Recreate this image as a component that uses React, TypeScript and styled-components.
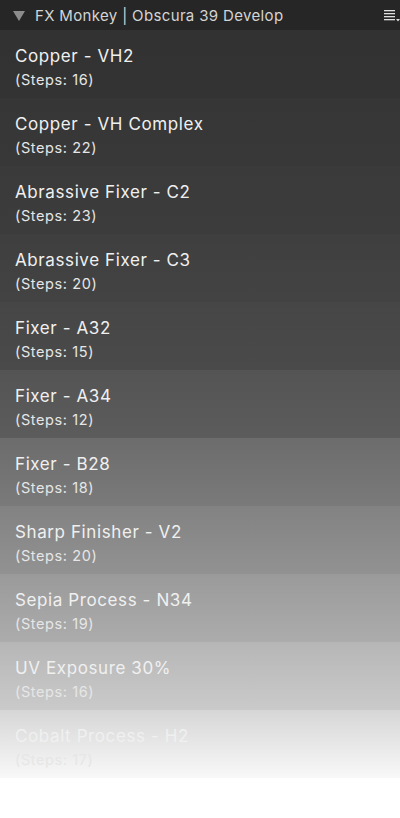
import styled, { createGlobalStyle } from 'styled-components'

const GlobalStyle = createGlobalStyle`
  html, body {
    margin: 0;
    padding: 0;
    background: #ffffff;
  }
  body {
    font-family: Inter, 'Liberation Sans', Arial, sans-serif;
    -webkit-font-smoothing: antialiased;
  }
`

interface Recipe {
  name: string
  steps: number
}

const RECIPES: Recipe[] = [
  { name: 'Copper - VH2', steps: 16 },
  { name: 'Copper - VH Complex', steps: 22 },
  { name: 'Abrassive Fixer - C2', steps: 23 },
  { name: 'Abrassive Fixer - C3', steps: 20 },
  { name: 'Fixer - A32', steps: 15 },
  { name: 'Fixer - A34', steps: 12 },
  { name: 'Fixer - B28', steps: 18 },
  { name: 'Sharp Finisher - V2', steps: 20 },
  { name: 'Sepia Process - N34', steps: 19 },
  { name: 'UV Exposure 30%', steps: 16 },
  { name: 'Cobalt Process - H2', steps: 17 },
]

//  row shades fade from dark to white towards the bottom
const SHADES: Array<[string, string]> = [
  ['#323232', '#333333'],
  ['#363636', '#383838'],
  ['#3a3a3a', '#3c3c3c'],
  ['#3f3f3f', '#434343'],
  ['#464646', '#4a4a4a'],
  ['#545454', '#5c5c5c'],
  ['#6c6c6c', '#7a7a7a'],
  ['#828282', '#929292'],
  ['#9a9a9a', '#acacac'],
  ['#b6b6b6', '#cacaca'],
  ['#d6d6d6', '#f8f8f8'],
]

const Panel = styled.div`
  width: 400px;
  display: flex;
  flex-direction: column;
`

const Header = styled.div`
  height: 30px;
  background: #262626;
  display: flex;
  align-items: center;
  padding: 0 0 0 13px;
  box-sizing: border-box;
`

const Disclosure = styled.span`
  width: 0;
  height: 0;
  border-left: 6px solid transparent;
  border-right: 6px solid transparent;
  border-top: 10px solid #8c8c8c;
  margin-right: 10px;
  margin-top: 1px;
`

const Title = styled.span`
  flex: 1;
  color: #d4d4d4;
  font-size: 15px;
  letter-spacing: 0.35px;
`

const MenuButton = styled.div`
  display: flex;
  align-items: center;
`

const List = styled.div`
  display: flex;
  flex-direction: column;
`

const Row = styled.div<{ $top: string; $bottom: string }>`
  height: 68px;
  box-sizing: border-box;
  padding: 15px 15px 0;
  background: linear-gradient(${(p) => p.$top}, ${(p) => p.$bottom});
  display: flex;
  flex-direction: column;
  gap: 4px;
`

const RowName = styled.div`
  color: #f0f0f0;
  font-size: 17px;
  line-height: 22px;
  letter-spacing: 0.6px;
`

const RowSteps = styled.div`
  color: #e6e6e6;
  font-size: 14.5px;
  line-height: 18px;
  letter-spacing: 0.6px;
`

function MenuIcon(): JSX.Element {
  return (
    <svg width="18" height="14" viewBox="0 0 18 14">
      <g fill="#e0e0e0">
        <rect x="2" y="2" width="11" height="1.3" />
        <rect x="2" y="5" width="11" height="1.3" />
        <rect x="2" y="8" width="11" height="1.3" />
        <rect x="2" y="11" width="11" height="1.3" />
        <polygon points="14,11 18,11 16,13.5" />
      </g>
    </svg>
  )
}

export default function App(): JSX.Element {
  return (
    <Panel>
      <GlobalStyle />
      <Header>
        <Disclosure />
        <Title>FX Monkey | Obscura 39 Develop</Title>
        <MenuButton>
          <MenuIcon />
        </MenuButton>
      </Header>
      <List>
        {RECIPES.map((recipe, i) => (
          <Row key={recipe.name} $top={SHADES[i][0]} $bottom={SHADES[i][1]}>
            <RowName>{recipe.name}</RowName>
            <RowSteps>(Steps: {recipe.steps})</RowSteps>
          </Row>
        ))}
      </List>
    </Panel>
  )
}
